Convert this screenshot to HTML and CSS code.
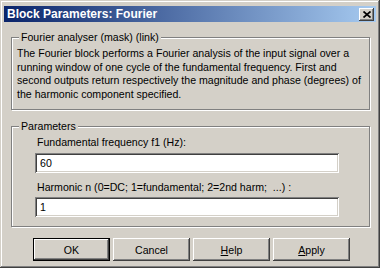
FILE: index.html
```html
<!DOCTYPE html>
<html lang="en">
<head>
    <meta charset="UTF-8">
    <title>Block Parameters: Fourier</title>
    <link rel="stylesheet" href="styles.css">
</head>
<body>
<div class="window">
    <div class="titlebar">
        <span class="title">Block Parameters: Fourier</span>
        <button class="close-btn" aria-label="Close">
            <svg width="8" height="7" viewBox="0 0 8 7">
                <path d="M0.5 0.5 L7.5 6.5 M7.5 0.5 L0.5 6.5" stroke="#000" stroke-width="1.7" fill="none"/>
            </svg>
        </button>
    </div>

    <div class="client">
        <div class="group desc-group">
            <span class="group-label">Fourier analyser (mask) (link)</span>
            <p class="desc">
                The Fourier block performs a Fourier analysis of the input signal over a<br>
                running window of one cycle of the fundamental frequency. First and<br>
                second outputs return respectively the magnitude and phase (degrees) of<br>
                the harmonic component specified.
            </p>
        </div>

        <div class="group params-group">
            <span class="group-label">Parameters</span>
            <label for="f1" class="field-label">Fundamental frequency f1 (Hz):</label>
            <input type="text" id="f1" class="edit" value="60">
            <label for="harm" class="field-label second">Harmonic n (0=DC; 1=fundamental; 2=2nd harm;&nbsp; ...) :</label>
            <input type="text" id="harm" class="edit" value="1">
        </div>

        <div class="buttons">
            <button class="btn default">OK</button>
            <button class="btn">Cancel</button>
            <button class="btn"><u>H</u>elp</button>
            <button class="btn"><u>A</u>pply</button>
        </div>
    </div>
</div>
</body>
</html>
```

FILE: styles.css
```css
:root {
    --face: #d4d0c8;
    --shadow: #808080;
    --dark: #404040;
    --light: #fff;
}

* {
    margin: 0;
    padding: 0;
    box-sizing: border-box;
    font-family: 'Liberation Sans', Arial, sans-serif;
}

body {
    background-color: var(--face);
    width: 380px;
    height: 268px;
    overflow: hidden;
}

.window {
    width: 380px;
    height: 268px;
    background-color: var(--face);
    padding: 6px 4px 4px 4px;
    box-shadow: inset -1px -1px var(--dark), inset 1px 1px var(--face),
                inset -2px -2px var(--shadow), inset 2px 2px var(--light);
}

.titlebar {
    height: 16px;
    display: flex;
    align-items: center;
    justify-content: space-between;
    padding: 0 2px 0 3px;
    background: linear-gradient(to right, #0a246a, #a6caf0);
}

.title {
    color: #fff;
    font-size: 12px;
    font-weight: 700;
}

.close-btn {
    width: 15px;
    height: 13px;
    border: none;
    background-color: var(--face);
    display: flex;
    align-items: center;
    justify-content: center;
    box-shadow: inset -1px -1px var(--dark), inset 1px 1px var(--light),
                inset -2px -2px var(--shadow), inset 2px 2px var(--face);
}

.client {
    padding: 0 6px 0 7px;
    font-size: 10.6px;
    color: #000;
}

/* etched group boxes */
.group {
    position: relative;
    border: 1px solid var(--shadow);
    box-shadow: inset 1px 1px var(--light), 1px 1px var(--light);
}

.group-label {
    position: absolute;
    top: -7px;
    left: 7px;
    padding: 0 2px;
    line-height: 13px;
    background-color: var(--face);
}

.desc-group {
    margin-top: 15px;
    padding: 9px 5px 8px 5px;
}

.desc {
    line-height: 13.5px;
    white-space: nowrap;
}

.params-group {
    margin-top: 16px;
    padding: 8px 0 9px 23px;
}

.field-label {
    display: block;
    line-height: 14px;
    padding-left: 2px;
    margin-bottom: 4px;
}

.field-label.second {
    margin-top: 7px;
    margin-bottom: 3px;
}

.edit {
    display: block;
    width: 304px;
    height: 20px;
    border: none;
    background-color: #fff;
    padding-left: 5px;
    font-size: 10.6px;
    color: #000;
    box-shadow: inset 1px 1px var(--shadow), inset -1px -1px var(--light),
                inset 2px 2px var(--dark), inset -2px -2px var(--face);
}

.edit:focus {
    outline: none;
}

.buttons {
    display: flex;
    gap: 3px;
    margin-top: 11px;
    padding-left: 22px;
}

.btn {
    width: 77px;
    height: 23px;
    border: none;
    background-color: var(--face);
    font-size: 10.6px;
    color: #000;
    box-shadow: inset -1px -1px var(--dark), inset 1px 1px var(--light),
                inset -2px -2px var(--shadow), inset 2px 2px var(--face);
}

.btn.default {
    border: 1px solid #000;
}
```
